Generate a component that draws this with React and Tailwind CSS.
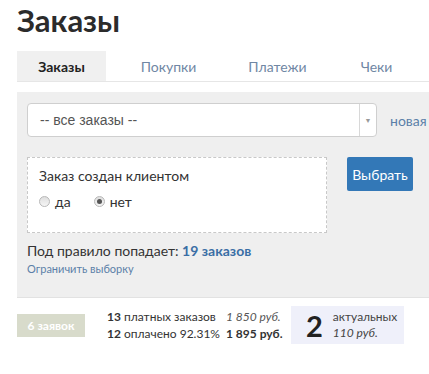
import { useState } from "react";

const tabs = [
  { label: "Заказы", cls: "" },
  { label: "Покупки", cls: "ml-[18px]" },
  { label: "Платежи", cls: "ml-[20px]" },
  { label: "Чеки", cls: "ml-[10px]" },
];

function Radio({ checked, label }) {
  return (
    <label className="flex items-center gap-[5px] cursor-pointer">
      <span className="w-[11px] h-[11px] rounded-full border border-[#b8b8b8] bg-gradient-to-b from-[#dedede] to-[#f6f6f6] flex items-center justify-center">
        {checked && <span className="w-[5px] h-[5px] rounded-full bg-[#555]" />}
      </span>
      <span>{label}</span>
    </label>
  );
}

export default function App() {
  const [active] = useState(0);

  return (
    <div className="w-[429px] h-[374px] overflow-hidden bg-white pl-[17px] font-['Lato','Noto_Sans',sans-serif] text-[#333]">
      <h1 className="pt-[2px] h-[51px] text-[31px] leading-[36px] font-bold text-[#2b2b2b]">
        Заказы
      </h1>

      <div className="flex border-b border-[#e6e6e6] w-[420px]">
        {tabs.map((t, i) => (
          <div
            key={t.label}
            className={
              "w-[89px] h-[30px] flex items-center justify-center text-[14px] " +
              t.cls +
              (i === active ? " bg-[#f0f0f0] font-bold text-[#222]" : " text-[#7087a4]")
            }
          >
            {t.label}
          </div>
        ))}
      </div>

      <div className="mt-[10px] w-[420px] h-[206px] bg-[#efefef] border-b border-[#e2e2e2] pl-[10px] pt-[11px]">
        <div className="flex items-center">
          <div className="w-[350px] h-[34px] bg-white border border-[#cfcfcf] rounded-[4px] flex items-center">
            <span className="flex-1 pl-[12px] text-[14px] text-[#555] font-['Liberation_Sans',Arial,sans-serif]">
              -- все заказы --
            </span>
            <span className="w-[17px] h-full border-l border-[#d8d8d8] flex items-center justify-center text-[7px] text-[#999]">
              ▼
            </span>
          </div>
          <a className="ml-[13px] text-[14px] text-[#5b7fa8] whitespace-nowrap">новая</a>
        </div>

        <div className="flex mt-[20px]">
          <div className="w-[300px] h-[76px] bg-white border border-dashed border-[#c8c8c8] pl-[11px] pt-[7px] text-[14px]">
            <div className="text-[#333]">Заказ создан клиентом</div>
            <div className="flex gap-[23px] mt-[5px] text-[#333]">
              <Radio label="да" />
              <Radio label="нет" checked />
            </div>
          </div>
          <button className="ml-[20px] w-[66px] h-[34px] bg-[#3378b7] text-white text-[14px] rounded-[2px]">
            Выбрать
          </button>
        </div>

        <div className="mt-[7px] text-[14px] text-[#333]">
          Под правило попадает: <span className="font-bold text-[#3a6ea5]">19 заказов</span>
        </div>
        <div className="text-[11px] text-[#5b7fa8]">Ограничить выборку</div>
      </div>

      <div className="flex items-start mt-[10px]">
        <div className="mt-[6px] w-[68px] h-[23px] bg-[#d8dbcb] text-white text-[12px] font-bold flex items-center justify-center">
          6 заявок
        </div>
        <div className="ml-[22px] w-[172px] grid grid-cols-[auto_auto] justify-start gap-x-[6px] text-[12px] leading-[17px] text-[#333] whitespace-nowrap">
          <span>
            <b>13</b> платных заказов
          </span>
          <i className="text-[#555]">1 850 руб.</i>
          <span>
            <b>12</b> оплачено 92.31%
          </span>
          <b>1 895 руб.</b>
        </div>
        <div className="ml-[12px] -mt-[2px] w-[113px] h-[38px] bg-[#eff0fa] flex items-center pl-[15px]">
          <span className="text-[29px] font-bold leading-none text-[#222]">2</span>
          <div className="ml-[10px] text-[12px] leading-[16px] text-[#444] whitespace-nowrap">
            <div>актуальных</div>
            <i>110 руб.</i>
          </div>
        </div>
      </div>
    </div>
  );
}
